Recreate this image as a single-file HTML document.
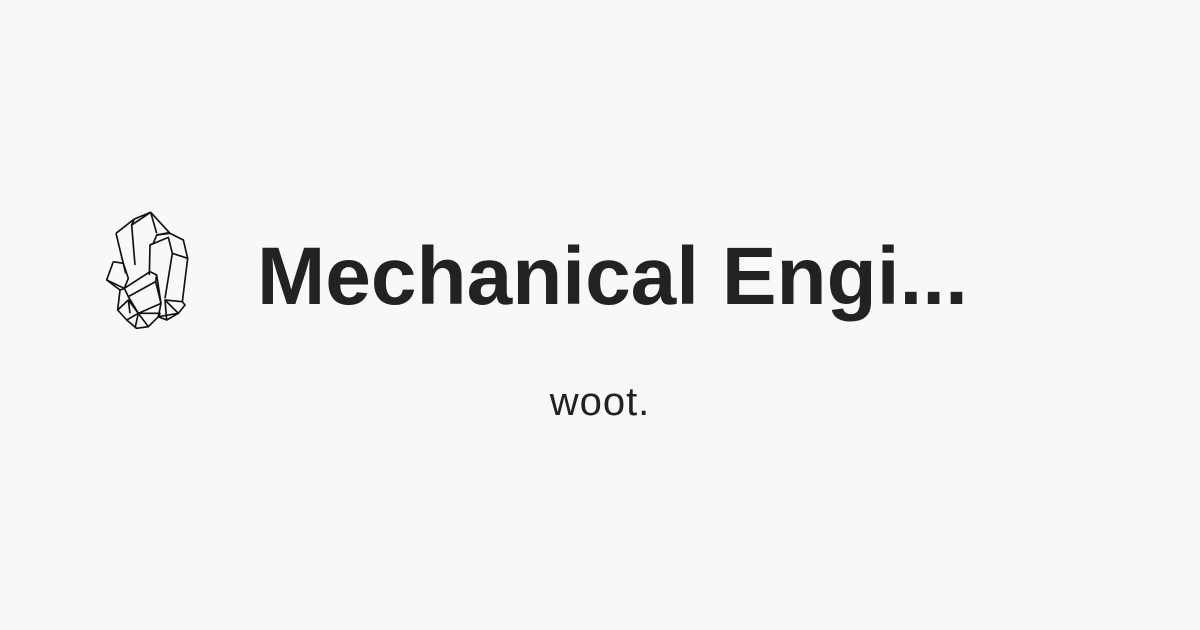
<!DOCTYPE html>
<html><head><style>
html,body{margin:0;padding:0;}
body{width:1200px;height:630px;background:#f9f8f8;position:relative;overflow:hidden;font-family:"Liberation Sans",sans-serif;color:#222;}
.t{position:absolute;left:257px;top:222px;font-size:82px;font-weight:bold;white-space:nowrap;line-height:110px;}
.s{position:absolute;left:0;width:1200px;text-align:center;top:378px;font-size:40px;letter-spacing:1px;line-height:48px;color:#222;}
svg{position:absolute;left:95px;top:200px;}
</style></head><body>
<svg width="110" height="140" viewBox="0 0 330 420" fill="none" stroke="#111" stroke-width="5" stroke-linejoin="round">
<path d="M63 100 L118 57 L167 37 L225 100 L222 98 L185 105 L175 130 L165 135 L163 225"/>
<path d="M63 100 L92 220"/>
<path d="M118 57 L110 75 L120 195"/>
<path d="M167 37 L185 100"/>
<path d="M110 75 L167 37"/>
<path d="M185 105 L225 100 L265 120 L278 175 L262 305"/>
<path d="M165 135 L220 112 L232 160 L278 175"/>
<path d="M232 160 L210 295"/>
<path d="M55 185 L85 190 L100 235 L88 265"/>
<path d="M55 185 L35 240 L75 270 L90 265"/>
<path d="M35 240 L88 265"/>
<path d="M88 265 L165 215 L185 225 L198 310 L130 340 L100 290 Z"/>
<path d="M100 290 L182 245 L185 225"/>
<path d="M182 245 L198 310"/>
<path d="M75 270 L68 330 L95 360 L125 385 L160 380 L190 350 L215 360 L250 340 L270 315 L262 305 L210 300"/>
<path d="M68 330 L100 300 L130 340 L120 385"/>
<path d="M95 360 L130 340 L160 380"/>
<path d="M130 340 L195 340 L190 350"/>
<path d="M198 310 L190 350 L250 340 L210 300 L215 360"/>
<path d="M100 300 L105 340"/>
</svg>
<div class="t">Mechanical Engi...</div>
<div class="s">woot.</div>
</body></html>
